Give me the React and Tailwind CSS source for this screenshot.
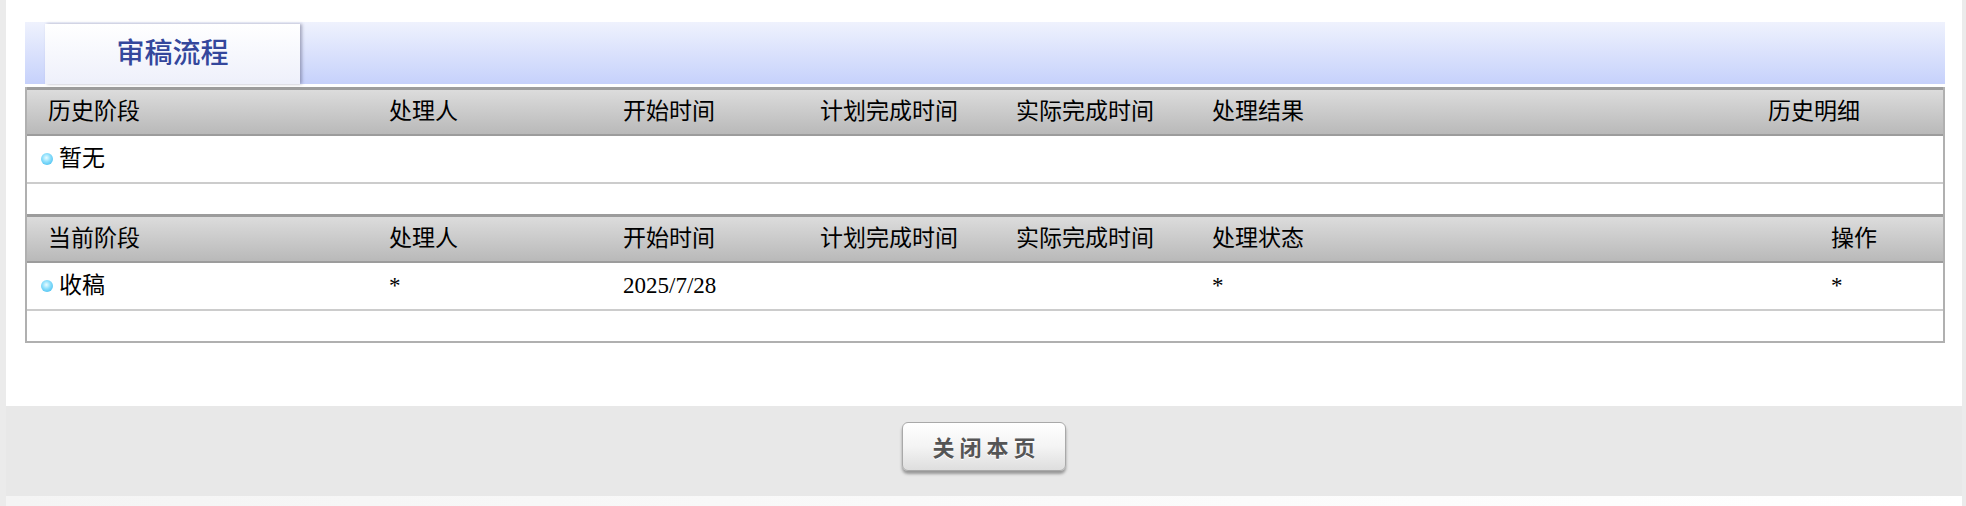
import React from "react";

const font = { fontFamily: '"Liberation Serif", "Noto Sans CJK SC", serif' };

function Bullet() {
  return (
    <span
      className="inline-block w-[12px] h-[12px] rounded-full mr-[6px] shrink-0"
      style={{ background: "radial-gradient(circle at 45% 40%, #eafcff 0%, #8fe0fc 40%, #2fb4ec 100%)" }}
    />
  );
}

function HeaderRow({ cols, last, lastW }) {
  return (
    <div className="flex items-center h-[49px] border-t-[3px] border-b-[2px] border-[#9c9c9c] bg-gradient-to-b from-[#dcdcdc] to-[#b9b9b9] text-[23px] text-black">
      <div className="w-[362px] pl-[21px] shrink-0">{cols[0]}</div>
      <div className="w-[234px] shrink-0">{cols[1]}</div>
      <div className="w-[197px] shrink-0">{cols[2]}</div>
      <div className="w-[196px] shrink-0">{cols[3]}</div>
      <div className="w-[196px] shrink-0">{cols[4]}</div>
      <div className="flex-1">{cols[5]}</div>
      <div className="shrink-0" style={{ width: lastW }}>{last}</div>
    </div>
  );
}

function DataRow({ cells, lastW }) {
  return (
    <div className="flex items-center h-[48px] border-b-[2px] border-[#cccccc] text-[23px] text-black">
      <div className="w-[362px] pl-[14px] shrink-0 flex items-center">
        <Bullet />
        {cells[0]}
      </div>
      <div className="w-[234px] shrink-0">{cells[1]}</div>
      <div className="w-[197px] shrink-0">{cells[2]}</div>
      <div className="w-[196px] shrink-0">{cells[3]}</div>
      <div className="w-[196px] shrink-0">{cells[4]}</div>
      <div className="flex-1">{cells[5]}</div>
      <div className="shrink-0" style={{ width: lastW }}>{cells[6]}</div>
    </div>
  );
}

export default function App() {
  return (
    <div className="w-[1966px] h-[506px] flex bg-white overflow-hidden" style={font}>
      <div className="w-[6px] bg-[#ebebeb] shrink-0" />
      <div className="flex-1 flex flex-col">
        <div className="pt-[22px] pl-[19px] pr-[17px] h-[406px] bg-white">
          {/* tab band */}
          <div className="h-[62px] bg-gradient-to-b from-[#eff2fd] to-[#c6d1fb] pl-[20px] flex items-end">
            <div
              className="w-[255px] h-[60px] bg-gradient-to-b from-white to-[#eef0fb] flex items-center justify-center text-[28px] text-[#34479c] font-medium"
              style={{ boxShadow: "2px 0 3px rgba(80,80,110,0.45)" }}
            >
              审稿流程
            </div>
          </div>
          {/* table */}
          <div className="mt-[3px] border-l-[2px] border-r-[2px] border-b-[2px] border-[#b0b0b0]">
            <HeaderRow
              cols={["历史阶段", "处理人", "开始时间", "计划完成时间", "实际完成时间", "处理结果"]}
              last="历史明细"
              lastW="175px"
            />
            <DataRow cells={["暂无", "", "", "", "", "", ""]} lastW="175px" />
            <div className="h-[30px]" />
            <HeaderRow
              cols={["当前阶段", "处理人", "开始时间", "计划完成时间", "实际完成时间", "处理状态"]}
              last="操作"
              lastW="112px"
            />
            <DataRow cells={["收稿", "*", "2025/7/28", "", "", "*", "*"]} lastW="112px" />
            <div className="h-[30px]" />
          </div>
        </div>
        <div className="h-[90px] bg-[#e8e8e8] flex justify-center pt-[16px]">
          <button
            className="w-[164px] h-[49px] rounded-[6px] border border-[#a9a9a9] bg-gradient-to-b from-white via-[#f4f4f4] to-[#dedede] text-[22px] font-bold text-[#555] tracking-[5px] pl-[5px]"
            style={{
              fontFamily: '"Noto Sans CJK SC", sans-serif',
              boxShadow: "0 3px 3px rgba(0,0,0,0.35)",
              textShadow: "0 1px 0 #fff",
            }}
          >
            关闭本页
          </button>
        </div>
        <div className="flex-1 bg-gradient-to-r from-[#f4f4f4] to-white" />
      </div>
      <div className="w-[4px] bg-[#ebebeb] shrink-0" />
    </div>
  );
}
